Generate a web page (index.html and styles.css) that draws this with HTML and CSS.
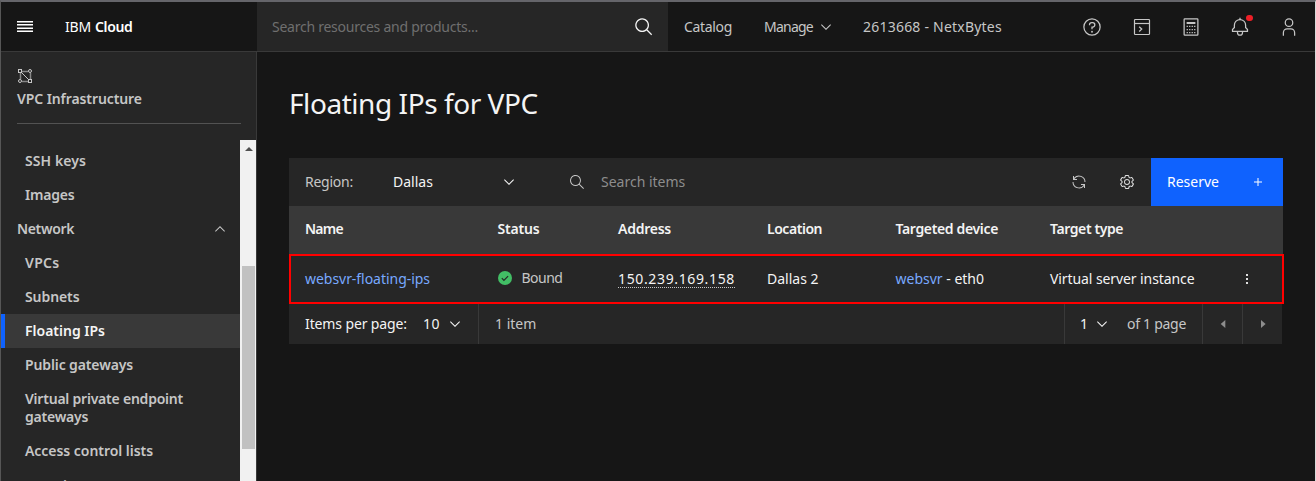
FILE: index.html
```html
<!DOCTYPE html>
<html lang="en">
<head>
<meta charset="utf-8">
<title>Floating IPs for VPC</title>
<link rel="stylesheet" href="styles.css">
</head>
<body>
<div class="window">
  <header class="topbar">
    <div class="brand">
      <span class="burger"><i></i><i></i><i></i><i></i></span>
      <span class="logo"><span class="ibm">IBM</span><b class="cloud">Cloud</b></span>
    </div>
    <div class="search">
      <span class="search-text">Search resources and products...</span>
      <svg class="ic20" viewBox="0 0 32 32"><path d="M29 27.586l-7.552-7.552a11.018 11.018 0 1 0-1.414 1.414L27.586 29zM4 13a9 9 0 1 1 9 9 9.010 9.010 0 0 1-9-9z"/></svg>
    </div>
    <nav class="links">
      <span class="catalog">Catalog</span>
      <span class="manage">Manage</span>
      <svg class="ic16 caret" viewBox="0 0 16 16"><path d="M8 11 3 6l.7-.7L8 9.600l4.300-4.300.7.7z"/></svg>
      <span class="account">2613668 - NetxBytes</span>
    </nav>
    <div class="tools">
      <svg class="ic20" viewBox="0 0 32 32"><path d="M16 2a14 14 0 1 0 14 14A14 14 0 0 0 16 2zm0 26a12 12 0 1 1 12-12 12 12 0 0 1-12 12z"/><circle cx="16" cy="23.500" r="1.500"/><path d="M17 8h-1.500A4.490 4.490 0 0 0 11 12.500v.5h2v-.5a2.500 2.500 0 0 1 2.500-2.500H17a2.500 2.500 0 0 1 0 5h-2v4.500h2V17a4.500 4.500 0 0 0 0-9z"/></svg>
      <svg class="ic20 shell" viewBox="0 0 20 20" fill="none" stroke="currentColor"><rect x="2.500" y="2.500" width="15" height="15" rx=".8" stroke-width="1.200"/><path d="M3 6.500h14" stroke-width="1.200"/><path d="M7.200 9.700l2.500 2.400-2.500 2.400" stroke-width="1.300"/></svg>
      <svg class="ic20" viewBox="0 0 32 32"><path d="M26 4v24H6V4h20m0-2H6a2 2 0 0 0-2 2v24a2 2 0 0 0 2 2h20a2 2 0 0 0 2-2V4a2 2 0 0 0-2-2z"/><path d="M9 8h14v3H9zM9 14h2v2H9zm4 0h2v2h-2zm4 0h2v2h-2zm4 0h2v2h-2zM9 19h2v2H9zm4 0h2v2h-2zm4 0h2v2h-2zm4 0h2v2h-2zM9 24h2v2H9zm4 0h2v2h-2zm4 0h2v2h-2zm4 0h2v2h-2z"/></svg>
      <span class="bell">
        <svg class="ic20" viewBox="0 0 32 32"><path d="M28.707 19.293L26 16.586V13a10.014 10.014 0 0 0-9-9.950V1h-2v2.050A10.014 10.014 0 0 0 6 13v3.586l-2.707 2.707A1 1 0 0 0 3 20v3a1 1 0 0 0 1 1h7v1a5 5 0 0 0 10 0v-1h7a1 1 0 0 0 1-1v-3a1 1 0 0 0-.293-.707zM19 25a3 3 0 0 1-6 0v-1h6zm8-3H5v-1.586l2.707-2.707A1 1 0 0 0 8 17v-4a8 8 0 0 1 16 0v4a1 1 0 0 0 .293.707L27 20.414z"/></svg>
        <i class="dot"></i>
      </span>
      <svg class="ic20" viewBox="0 0 32 32"><path d="M16 4a5 5 0 1 1-5 5 5 5 0 0 1 5-5m0-2a7 7 0 1 0 7 7 7 7 0 0 0-7-7zM26 30h-2v-5a5 5 0 0 0-5-5h-6a5 5 0 0 0-5 5v5H6v-5a7 7 0 0 1 7-7h6a7 7 0 0 1 7 7z"/></svg>
    </div>
  </header>
  <div class="body">
    <aside class="side">
      <div class="side-head">
        <svg class="ic16" viewBox="0 0 16 16" fill="none" stroke="currentColor"><path d="M5 5l6.500 6.500"/><path d="M5 3.500h6M3.500 5v6M13.500 5v6M5 13.500h6" opacity=".6" stroke-width="1.500"/><rect x="1.500" y="1.500" width="3" height="3"/><rect x="11.500" y="11.500" width="3" height="3"/><circle cx="13" cy="3" r="1.500"/><circle cx="3" cy="13" r="1.500"/></svg>
        <span class="side-title">VPC Infrastructure</span>
      </div>
      <div class="side-body">
        <div class="menu">
          <span class="item ssh">SSH keys</span>
          <span class="item images">Images</span>
          <span class="item group"><span class="network">Network</span><svg class="ic16" viewBox="0 0 16 16"><path d="M8 5l5 5-.7.7L8 6.400l-4.300 4.300L3 10z"/></svg></span>
          <span class="item vpcs">VPCs</span>
          <span class="item subnets">Subnets</span>
          <span class="item active">Floating IPs</span>
          <span class="item public">Public gateways</span>
          <span class="item endpoint">Virtual private endpoint<br>gateways</span>
          <span class="item acl">Access control lists</span>
          <span class="item security">Security groups</span>
        </div>
        <div class="scroll"><i class="up"></i><i class="thumb"></i></div>
      </div>
    </aside>
    <main class="main">
      <h1>Floating IPs for VPC</h1>
      <section class="panel">
        <div class="toolbar">
          <span class="region">Region:</span>
          <span class="dallas">Dallas</span>
          <svg class="ic16 pick" viewBox="0 0 16 16"><path d="M8 11 3 6l.7-.7L8 9.600l4.300-4.300.7.7z"/></svg>
          <svg class="ic16 find" viewBox="0 0 16 16"><path d="M15 14.300L10.700 10c1.900-2.300 1.600-5.800-.7-7.700S4.200.7 2.300 3 .7 8.800 3 10.700c2 1.700 5 1.700 7 0l4.300 4.300.7-.7zM2 6.500C2 4 4 2 6.500 2S11 4 11 6.500 9 11 6.500 11 2 9 2 6.500z"/></svg>
          <span class="search-items">Search items</span>
          <span class="grow"></span>
          <svg class="ic16 refresh" viewBox="0 0 32 32"><path d="M12 10H6.780A11 11 0 0 1 27 16h2A13 13 0 0 0 6 7.680V4H4v8h8zM20 22h5.220A11 11 0 0 1 5 16H3a13 13 0 0 0 23 8.320V28h2v-8h-8z"/></svg>
          <svg class="ic16 gear" viewBox="0 0 16 16"><path d="M13.500 8.400v-.8l1-.8c.4-.3.500-.8.200-1.300l-1.200-2c-.2-.3-.5-.5-.9-.5-.1 0-.2 0-.3.100l-1.200.4c-.2-.1-.4-.3-.7-.4l-.3-1.300c-.1-.5-.5-.8-1-.8H6.800c-.5 0-.9.3-1 .8l-.3 1.300c-.2.100-.4.200-.7.400l-1.200-.4c-.1-.1-.2-.1-.3-.1-.4 0-.7.200-.9.500l-1.200 2c-.2.400-.1.900.3 1.300l1 .8v.9l-1 .8c-.4.300-.5.900-.2 1.300l1.200 2c.2.300.5.500.9.500.1 0 .2 0 .3-.1l1.200-.4c.2.100.4.300.7.400l.3 1.300c.1.500.5.800 1 .8h2.400c.5 0 .9-.3 1-.8l.3-1.300c.2-.1.4-.2.7-.4l1.200.4c.1 0 .2.100.3.100.4 0 .7-.2.900-.5l1.100-2c.2-.4.200-.9-.2-1.300zm-.9 3.600-1.700-.6c-.4.300-.8.600-1.300.8L9.200 14H6.800l-.4-1.800c-.5-.2-.9-.5-1.300-.8l-1.700.6-1.200-2 1.400-1.200c-.1-.5-.1-1 0-1.500L2.200 6l1.200-2 1.700.6c.4-.3.800-.6 1.300-.8L6.800 2h2.400l.4 1.800c.5.200.9.500 1.300.8l1.700-.6 1.200 2-1.400 1.200c.1.500.1 1 0 1.500l1.400 1.300z"/><path d="M8 11c-1.700 0-3-1.300-3-3s1.300-3 3-3 3 1.300 3 3-1.300 3-3 3zm0-5c-1.100 0-2 .9-2 2s.9 2 2 2 2-.9 2-2-.9-2-2-2z"/></svg>
          <span class="reserve"><span>Reserve</span><svg class="ic16" viewBox="0 0 32 32"><path d="M17 15V8h-2v7H8v2h7v7h2v-7h7v-2z"/></svg></span>
        </div>
        <div class="row head">
          <span class="h-name">Name</span><span class="h-status">Status</span><span class="h-addr">Address</span><span class="h-loc">Location</span><span class="h-dev">Targeted device</span><span class="h-type">Target type</span>
        </div>
        <div class="row data">
          <a class="ip-name">websvr-floating-ips</a>
          <span class="status"><svg class="ic16" viewBox="0 0 16 16"><circle cx="8" cy="8" r="7" fill="#42be65"/><path d="M4.800 8.200l2.100 2.100 4.200-4.200" fill="none" stroke="#262626" stroke-width="1.200"/></svg><span>Bound</span></span>
          <span><span class="addr">150.239.169.158</span></span>
          <span class="loc">Dallas 2</span>
          <span><a>websvr</a> - eth0</span>
          <span class="type">Virtual server instance</span>
          <span class="dots"><i></i><i></i><i></i></span>
        </div>
        <div class="pager">
          <span class="ipp">Items per page:</span>
          <span class="ten">10</span>
          <svg class="ic16" viewBox="0 0 16 16"><path d="M8 11 3 6l.7-.7L8 9.600l4.300-4.300.7.7z"/></svg>
          <span class="count">1 item</span>
          <span class="pageno"><span>1</span><svg class="ic16" viewBox="0 0 16 16"><path d="M8 11 3 6l.7-.7L8 9.600l4.300-4.300.7.7z"/></svg></span>
          <span class="ofpage">of 1 page</span>
          <span class="step"><svg class="ic16" viewBox="0 0 16 16"><path d="M10.300 4v8L5.700 8z"/></svg></span>
          <span class="step"><svg class="ic16" viewBox="0 0 16 16"><path d="M6 4v8l4.600-4z"/></svg></span>
        </div>
      </section>
    </main>
  </div>
</div>
</body>
</html>
```
FILE: styles.css
```css
* { box-sizing: border-box; }
body {
  margin: 0;
  background: #161616;
  color: #f4f4f4;
  font: 14px/18px "Noto Sans", "Open Sans", sans-serif;
}
svg { display: block; flex: none; fill: currentColor; }
svg[fill="none"] { fill: none; }
span, a { white-space: nowrap; }
.ic16 { width: 16px; height: 16px; }
.ic20 { width: 20px; height: 20px; }
.grow { flex: 1; }

.window {
  height: 481px;
  overflow: hidden;
  display: flex;
  flex-direction: column;
  border-top: 2px solid #65656a;
  border-left: 1px solid #565656;
  border-right: 1px solid #d8d8d8;
}

/* Top bar */
.topbar {
  height: 50px;
  flex: none;
  display: flex;
  border-bottom: 1px solid #393939;
  color: #c6c6c6;
}
.brand { width: 256px; display: flex; align-items: center; padding-left: 16px; color: #fff; }
.burger { width: 16px; height: 12px; display: flex; flex-direction: column; justify-content: space-between; }
.burger i { height: 2px; background: linear-gradient(#fff 50%, #8d8d8d 50%); }
.burger i:nth-child(n+3) { background: linear-gradient(#8d8d8d 50%, #fff 50%); }
.logo { margin-left: 32px; display: flex; gap: 4px; }
.ibm { letter-spacing: -.2px; }
.cloud { font-weight: 600; letter-spacing: -.35px; }
.search {
  width: 411px;
  background: #262626;
  display: flex;
  align-items: center;
  justify-content: space-between;
  padding: 0 14px 0 15px;
  color: #f4f4f4;
}
.search-text { color: #6f6f6f; letter-spacing: -.25px; padding-top: 1px; }
.links { display: flex; align-items: center; padding-left: 16px; }
.catalog { width: 80px; letter-spacing: -.33px; }
.manage { width: 54px; letter-spacing: -.76px; }
.caret { margin-right: 29px; }
.account { letter-spacing: .22px; }
.tools { margin-left: auto; display: flex; align-items: center; gap: 29.200px; padding-right: 16px; }
.shell { margin: 0 -1px 0 1px; }
.bell { position: relative; }
.dot { position: absolute; right: -3px; top: -2px; width: 6.500px; height: 6.500px; border-radius: 50%; background: #ee1f27; }

/* Side navigation */
.body { flex: 1; min-height: 0; display: flex; }
.side {
  width: 256px;
  flex: none;
  display: flex;
  flex-direction: column;
  background: #262626;
  border-right: 1px solid #393939;
  color: #c6c6c6;
  font-weight: 600;
}
.side-head {
  height: 72px;
  margin: 0 15px 16px 16px;
  padding-top: 16px;
  border-bottom: 1px solid #525252;
}
.side-title { display: block; margin-top: 6px; letter-spacing: -.09px; }
.side-body { flex: 1; min-height: 0; display: flex; }
.menu { flex: 1; padding-top: 4px; overflow: hidden; }
.item { display: block; padding: 8px 12px 8px 24px; }
.ssh { letter-spacing: .08px; }
.images { letter-spacing: -.19px; }
.group { display: flex; justify-content: space-between; align-items: center; padding-left: 16px; }
.network { letter-spacing: -.36px; }
.vpcs { letter-spacing: .31px; }
.subnets { letter-spacing: -.09px; }
.active { background: #393939; color: #f4f4f4; border-left: 4px solid #0f62fe; padding-left: 20px; }
.public { letter-spacing: -.12px; }
.endpoint { letter-spacing: -.22px; }
.acl { letter-spacing: -.04px; }
.security { padding-top: 9px; }
.scroll { width: 16px; background: #f1f1f1; padding: 7px 1px 0 2px; }
.scroll i { display: block; }
.up { width: 0; height: 0; margin: 0 auto; border: 4px solid transparent; border-top: 0; border-bottom-color: #505050; }
.thumb { height: 183px; margin-top: 115px; background: #c1c1c1; }

/* Page content */
.main { flex: 1; padding: 33px 32px 0; }
h1 { margin: 0; font-size: 28px; line-height: 36px; font-weight: 400; letter-spacing: -.44px; }
.panel { width: 994px; margin-top: 37px; }
.toolbar { height: 48px; display: flex; align-items: center; padding-left: 16px; background: #262626; }
.region { width: 88px; letter-spacing: -.24px; color: #c6c6c6; }
.dallas { width: 108px; }
.pick { margin-right: 52px; }
.find { margin-right: 16px; color: #c6c6c6; }
.search-items { color: #8d8d8d; }
.refresh { margin-right: 32px; color: #c6c6c6; }
.gear { margin-right: 16px; color: #e0e0e0; }
.reserve {
  width: 132px;
  height: 48px;
  display: flex;
  align-items: center;
  justify-content: space-between;
  padding: 0 17px 0 16px;
  background: #0f62fe;
  color: #fff;
}
.row {
  display: grid;
  grid-template-columns: 192.500px 120.500px 149px 128.500px 154.500px 189px 16px;
  align-items: center;
  padding-left: 16px;
}
.head { height: 48px; padding-bottom: 2px; background: #393939; font-weight: 600; }
.h-name { letter-spacing: -.73px; }
.h-status { letter-spacing: -.18px; }
.h-addr { letter-spacing: -.25px; }
.h-loc { letter-spacing: -.46px; }
.h-dev { letter-spacing: -.35px; }
.h-type { letter-spacing: -.41px; }
.data {
  width: 995px;
  height: 50px;
  padding-left: 14px;
  background: #262626;
  border: 2px solid #ff0000;
}
.data a { color: #78a9ff; }
.ip-name { letter-spacing: -.04px; }
.status { display: flex; align-items: center; gap: 9px; margin-left: -1px; color: #c6c6c6; letter-spacing: -.5px; padding-bottom: 2px; }
.addr { display: inline-block; line-height: 17px; letter-spacing: .64px; border-bottom: 1px dotted #c6c6c6; }
.type { letter-spacing: -.09px; }
.dots { display: flex; flex-direction: column; align-items: center; gap: 2px; }
.dots i { width: 2px; height: 2px; background: #e0e0e0; }
.pager { width: 993px; height: 40px; display: flex; align-items: center; padding-left: 16px; background: #262626; }
.ipp { width: 118px; letter-spacing: -.12px; }
.ten { width: 24px; letter-spacing: .5px; }
.count { flex: 1; height: 40px; line-height: 40px; margin-left: 15px; padding-left: 16px; border-left: 1px solid #393939; color: #c6c6c6; }
.pageno { width: 63px; height: 40px; display: flex; align-items: center; gap: 6px; padding-left: 15px; border-left: 1px solid #393939; }
.ofpage { width: 75px; letter-spacing: -.28px; color: #c6c6c6; }
.step { width: 40px; height: 40px; display: grid; place-items: center; border-left: 1px solid #393939; color: #8d8d8d; }
```
